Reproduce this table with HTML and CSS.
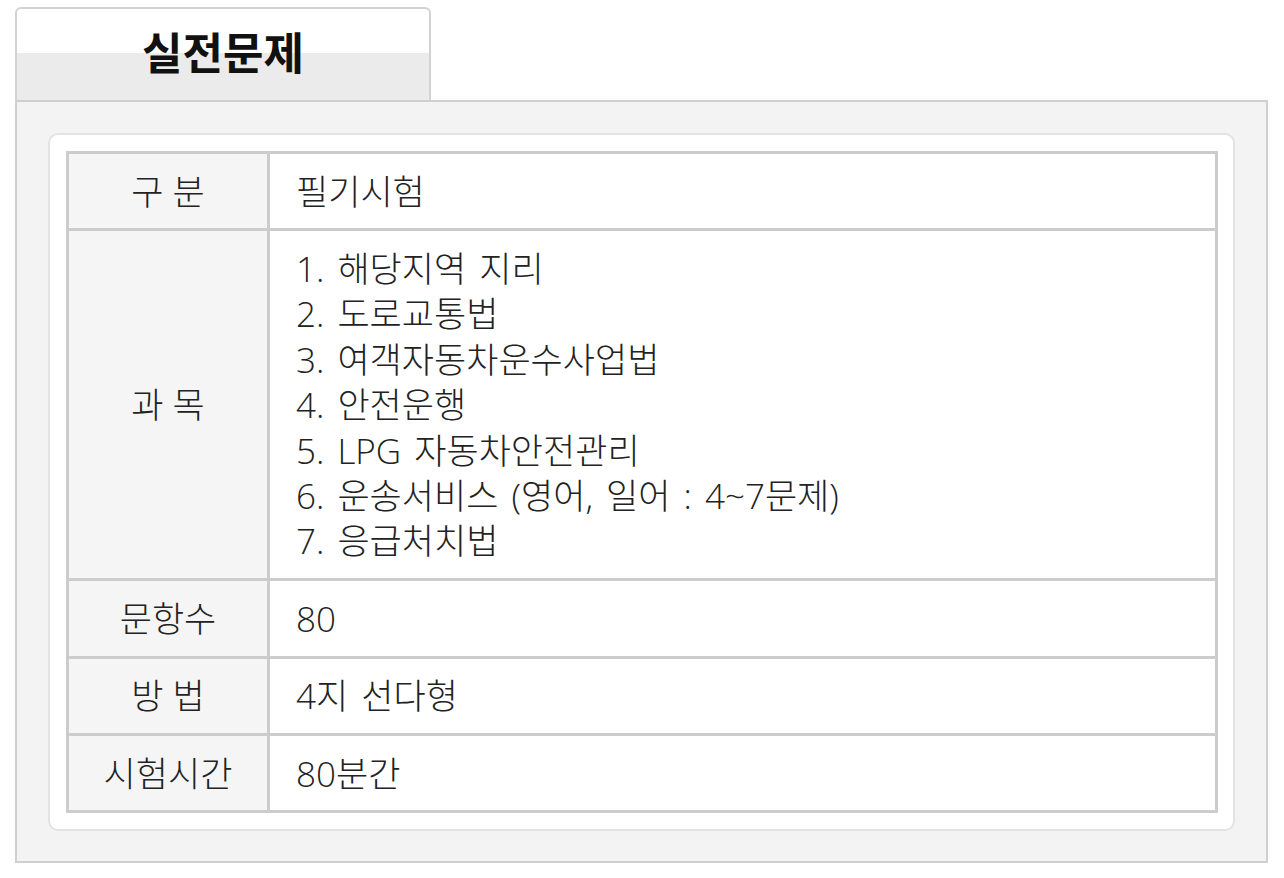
FILE: index.html
```html
<!DOCTYPE html>
<html lang="ko">
<head>
<meta charset="utf-8">
<title>실전문제</title>
<link rel="stylesheet" href="styles.css">
</head>
<body>
<div class="tab">실전문제</div>
<div class="panel">
  <div class="box">
    <table class="info">
      <colgroup><col class="c-label"><col></colgroup>
      <tr><td class="label">구 분</td><td>필기시험</td></tr>
      <tr><td class="label">과 목</td><td>1. 해당지역 지리<br>2. 도로교통법<br>3. 여객자동차운수사업법<br>4. 안전운행<br>5. LPG 자동차안전관리<br>6. 운송서비스 (영어, 일어 : 4~7문제)<br>7. 응급처치법</td></tr>
      <tr><td class="label">문항수</td><td>80</td></tr>
      <tr><td class="label">방 법</td><td>4지 선다형</td></tr>
      <tr><td class="label">시험시간</td><td>80분간</td></tr>
    </table>
  </div>
</div>
</body>
</html>
```
FILE: styles.css
```css
html, body { margin: 0; background: #fff; }
body {
  padding: 7px 16px 0 15px;
  font-family: "Open Sans", "Noto Sans CJK KR", sans-serif;
  color: #222;
}
.tab {
  box-sizing: border-box;
  width: 416px;
  height: 93px;
  border: 2px solid #d2d2d2;
  border-bottom: none;
  border-radius: 6px 6px 0 0;
  background: linear-gradient(#fff 0, #fff 48%, #ebebeb 48%, #ebebeb 100%);
  display: flex;
  align-items: center;
  justify-content: center;
  padding-bottom: 8px;
  font-family: "Noto Sans CJK KR", sans-serif;
  font-weight: 700;
  font-size: 44px;
  color: #111;
}
.panel {
  border: 2px solid #cfcfcf;
  background: #f3f3f3;
  padding: 31px 31px 30px;
}
.box {
  background: #fff;
  border: 2px solid #e3e3e3;
  border-radius: 10px;
  padding: 16px 15px 16px 16px;
}
.info {
  width: 100%;
  border-collapse: collapse;
  border: 3px solid #ccc;
}
.c-label { width: 201px; }
.info td {
  border: 3px solid #ccc;
  padding: 14.5px 26px;
  font-size: 35px;
  font-weight: 300;
  line-height: 45.4px;
  word-spacing: 4px;
  vertical-align: middle;
}
.info td.label {
  background: #f5f5f5;
  text-align: center;
  word-spacing: 0;
  padding: 14.5px 10px;
}
```
